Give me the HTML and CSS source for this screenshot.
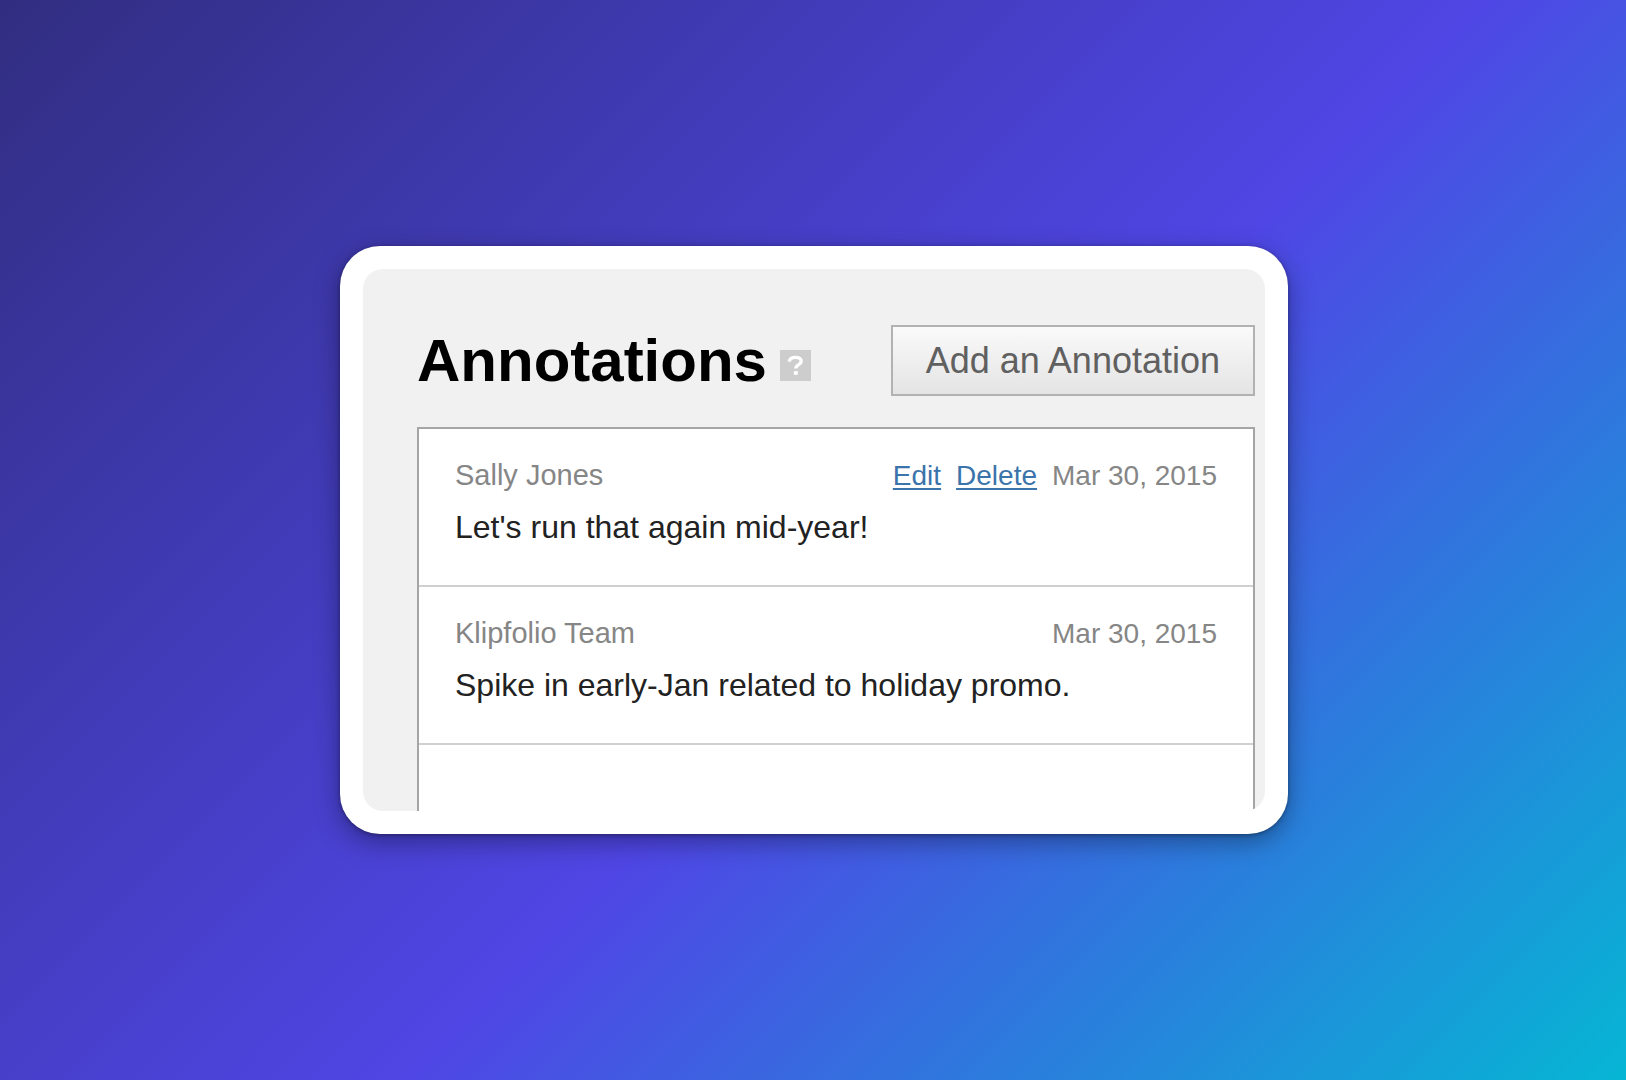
FILE: index.html
```html
<!DOCTYPE html>
<html lang="en">
<head>
<meta charset="utf-8">
<meta name="viewport" content="width=device-width, initial-scale=1">
<title>Annotations</title>
<link rel="stylesheet" href="styles.css">
</head>
<body>
<main class="card">
  <section class="panel">
    <header class="panel-header">
      <div class="title-group">
        <h1 class="title">Annotations</h1>
        <svg class="help-icon" viewBox="0 0 31 31" role="img" aria-label="Help">
          <rect width="31" height="31" fill="#cdcdcd"/>
          <path d="M9.3 11.6C9.6 8.6 12 7.4 15.4 7.4C19 7.4 21.2 8.8 21.2 11.3C21.2 14.8 15.8 14.6 15.8 18.6" fill="none" stroke="#fff" stroke-width="3.4"/>
          <rect x="13.8" y="21.2" width="4" height="3.6" fill="#fff"/>
        </svg>
      </div>
      <button class="add-button" type="button">Add an Annotation</button>
    </header>
    <ul class="list">
      <li class="note">
        <div class="meta">
          <span class="author">Sally Jones</span>
          <a class="action" href="#edit">Edit</a>
          <a class="action" href="#delete">Delete</a>
          <time class="date" datetime="2015-03-30">Mar 30, 2015</time>
        </div>
        <p class="text">Let's run that again mid-year!</p>
      </li>
      <li class="note">
        <div class="meta">
          <span class="author">Klipfolio Team</span>
          <time class="date" datetime="2015-03-30">Mar 30, 2015</time>
        </div>
        <p class="text">Spike in early-Jan related to holiday promo.</p>
      </li>
    </ul>
  </section>
</main>
</body>
</html>
```
FILE: styles.css
```css
* {
  box-sizing: border-box;
}

body {
  margin: 0;
  min-height: 100vh;
  padding: 40px 38px 40px 40px;
  display: flex;
  align-items: center;
  justify-content: center;
  font-family: "Liberation Sans", Arial, sans-serif;
  background: linear-gradient(135deg, #312e81 0%, #4f46e5 55%, #06b6d4 100%);
}

.card {
  width: 100%;
  max-width: 948px;
  padding: 23px;
  border-radius: 40px;
  background: #fff;
  box-shadow: 0 8px 26px rgba(0, 0, 0, 0.35), 0 1px 4px rgba(0, 0, 0, 0.35);
}

.panel {
  padding: 56px 10px 0 54px;
  border-radius: 20px;
  background: #f1f1f1;
  overflow: hidden;
}

.panel-header {
  display: flex;
  flex-wrap: wrap;
  align-items: center;
  justify-content: space-between;
  gap: 16px;
  margin-bottom: 31px;
}

.title-group {
  display: flex;
  align-items: baseline;
  gap: 13px;
}

.title {
  margin: 0;
  font-size: 60px;
  line-height: 60px;
  font-weight: 700;
  color: #000;
}

.help-icon {
  width: 31px;
  height: 31px;
}

.add-button {
  padding: 14px 33px 13px;
  border: 2px solid #b2b2b2;
  border-radius: 0;
  background: linear-gradient(#fafafa, #e4e4e4);
  color: #606060;
  font-family: inherit;
  font-size: 36px;
  line-height: 40px;
}

.list {
  margin: 0;
  padding: 0 0 66px;
  list-style: none;
  border: 2px solid #a5a5a5;
  border-bottom: 0;
  background: #fff;
}

.note {
  padding: 30px 36px 40px;
  border-bottom: 2px solid #d0d0d0;
}

.meta {
  display: flex;
  flex-wrap: wrap;
  align-items: baseline;
  gap: 15px;
  margin-bottom: 17px;
  font-size: 28px;
  line-height: 32px;
  color: #868686;
}

.author {
  margin-right: auto;
  font-size: 29px;
}

.action {
  color: #3a74ab;
  text-decoration-thickness: 2px;
  text-underline-offset: 3px;
}

.text {
  margin: 0;
  font-size: 32px;
  line-height: 36px;
  color: #222;
}
```
